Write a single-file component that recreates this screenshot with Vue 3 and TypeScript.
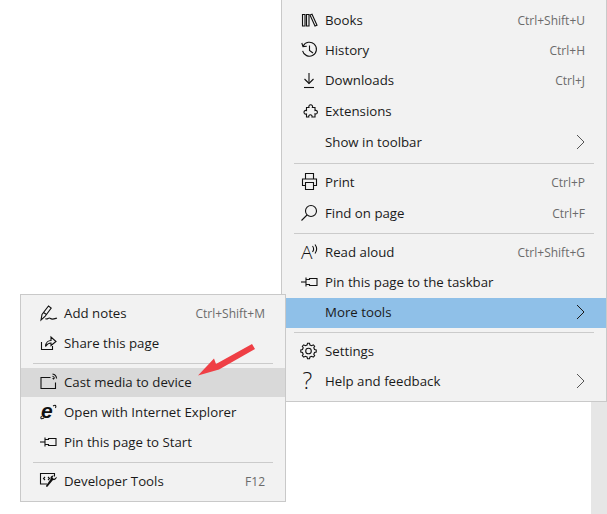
<script setup lang="ts">
interface Glyph { text: string; x: number; y: number; size: number; weight: number; family: string; italic?: boolean }
interface Row {
  kind: 'row' | 'sep'
  label?: string
  shortcut?: string
  chevron?: boolean
  size?: 'tall' | 'short'
  lift?: 'lift' | 'lift-more'
  state?: 'blue' | 'grey'
  paths?: string[]
  solid?: string[]
  glyph?: Glyph
  variant?: string
}

function gearPath(): string {
  const cx = 9.5
  const cy = 10
  const teeth = 8
  const pts: string[] = []
  for (let i = 0; i < teeth; i++) {
    const step = (Math.PI * 2) / teeth
    const a = i * step
    const spots: [number, number][] = [
      [a - step * 0.3, 6.2],
      [a - step * 0.16, 7.8],
      [a + step * 0.16, 7.8],
      [a + step * 0.3, 6.2],
    ]
    for (const [ang, r] of spots) {
      pts.push(`${(cx + r * Math.cos(ang)).toFixed(2)} ${(cy + r * Math.sin(ang)).toFixed(2)}`)
    }
  }
  return `M${pts.join('L')}Z`
}

const pin = ['M2 10H7', 'M7 5.5V14.5', 'M7 7.500H10.500V6.500H18V13.500H10.500V12.500H7']

const mainRows: Row[] = [
  { kind: 'row', label: 'Books', shortcut: 'Ctrl+Shift+U', paths: ['M3.5 4.5H6V16H3.5Z', 'M7.5 4.5H10V16H7.5Z', 'M11 5L13 4.2L18 15.2L16 16Z'] },
  { kind: 'row', label: 'History', shortcut: 'Ctrl+H', paths: ['M4.2 6A7 7 0 1 1 3.6 10.8', 'M2.8 3L4 6.6L7.8 6.2', 'M10.5 5.5V10.5L14 13'] },
  { kind: 'row', label: 'Downloads', shortcut: 'Ctrl+J', paths: ['M10 3V13.5', 'M5.5 9L10 13.5L14.5 9', 'M5 17.5H15'] },
  { kind: 'row', label: 'Extensions', size: 'tall', paths: ['M8 6.5H10C9.4 4.8 10.4 3.8 11.7 3.8C13 3.8 14 4.8 13.4 6.5H16V9.5C17.5 9 18.4 10 18.4 11.2C18.4 12.5 17.5 13.3 16 12.8V16H13C13.4 14.6 12.4 13.8 11.4 13.8C10.4 13.8 9.4 14.6 9.8 16H7.5V13C6 13.6 5 12.5 5 11.3C5 10 6.2 9 7.5 9.6V6.5Z'] },
  { kind: 'row', label: 'Show in toolbar', chevron: true, size: 'tall' },
  { kind: 'sep', variant: 'sep-wide' },
  { kind: 'row', label: 'Print', shortcut: 'Ctrl+P', size: 'tall', lift: 'lift', paths: ['M6.5 7V1.5H14.5V7', 'M6 13.5H3.5V7H17.5V13.5H15', 'M6.5 10.5H14.5V17.5H6.5Z'] },
  { kind: 'row', label: 'Find on page', shortcut: 'Ctrl+F', paths: ['M17.5 8A5.5 5.5 0 1 1 6.5 8A5.5 5.5 0 1 1 17.5 8Z', 'M8 12L2.5 17.5'] },
  { kind: 'sep' },
  { kind: 'row', label: 'Read aloud', shortcut: 'Ctrl+Shift+G', paths: ['M13.5 4C15 6 15 8 13.5 10', 'M16 2.5C18.2 5.5 18.2 8.5 16 11.5'], glyph: { text: 'A', x: 2, y: 17, size: 19, weight: 300, family: 'Open Sans' } },
  { kind: 'row', label: 'Pin this page to the taskbar', size: 'tall', lift: 'lift', paths: pin },
  { kind: 'row', label: 'More tools', chevron: true, state: 'blue', lift: 'lift-more' },
  { kind: 'sep', variant: 'sep-tight' },
  { kind: 'row', label: 'Settings', paths: [gearPath(), 'M12.3 10A2.8 2.8 0 1 1 6.7 10A2.8 2.8 0 1 1 12.3 10Z'] },
  { kind: 'row', label: 'Help and feedback', chevron: true, glyph: { text: '?', x: 3.5, y: 18, size: 23, weight: 300, family: 'Open Sans' } },
]

const subRows: Row[] = [
  { kind: 'row', label: 'Add notes', shortcut: 'Ctrl+Shift+M', paths: ['M3 17L4 11.5L10.5 3L13.2 5L7 13.5Z', 'M5.5 9.5L8.5 11.5', 'M7.5 15.5C9.5 17.5 10.5 13.5 12.5 15.5C14 17 16 16 19 15'] },
  { kind: 'row', label: 'Share this page', paths: ['M3.5 9V16.5H14.5V13', 'M7.5 13.5C7.8 9.5 10.5 7.5 13 7.5V4L18 8.5L13 12.5V10C10.8 10 9 11.2 7.5 13.5Z'] },
  { kind: 'sep', variant: 'sep-sub' },
  { kind: 'row', label: 'Cast media to device', state: 'grey', size: 'short', lift: 'lift', paths: ['M12.5 5.5H3V16.500H17.500V10.500', 'M14.5 2C16.8 2.3 18.3 3.8 18.6 6.500', 'M14.5 4.200C15.800 4.500 16.300 5.200 16.600 6.500', 'M14.5 6.500H15.500V7.500'] },
  { kind: 'row', label: 'Open with Internet Explorer', glyph: { text: 'e', x: 3, y: 15.5, size: 21, weight: 700, family: 'Liberation Sans', italic: true }, paths: ['M3.5 14C2 16.5 3 17.5 6 16', 'M15 4C17.5 2.5 18.5 3.5 17.5 6'] },
  { kind: 'row', label: 'Pin this page to Start', paths: pin },
  { kind: 'sep' },
  { kind: 'row', label: 'Developer Tools', shortcut: 'F12', paths: ['M16.5 5.5V2.5H2.5V13H9', 'M7 6L5.5 7.5L7 9', 'M10 6L11.5 7.5L10 9'], solid: ['M18.8 5.8C18.9 8 17 9.6 15 9L9.6 15.6C8.8 16.4 7.6 15.4 8.2 14.4L12.6 8C12 6 13.6 4.4 15.8 4.6L14.4 6.4L16 8L18.8 5.8Z'] },
]

const menus = [
  { name: 'main', rows: mainRows },
  { name: 'sub', rows: subRows },
]
</script>

<template>
  <div class="page">
    <div class="strip"></div>
    <div v-for="menu in menus" :key="menu.name" class="menu" :class="`menu-${menu.name}`">
      <template v-for="(row, i) in menu.rows" :key="i">
        <div v-if="row.kind === 'sep'" class="sep" :class="row.variant"></div>
        <div v-else class="row" :class="[row.size ?? '', row.lift ?? '', row.state ? `is-${row.state}` : '']">
          <svg class="icon" viewBox="0 0 20 20" width="20" height="20">
            <text
              v-if="row.glyph"
              class="glyph"
              :x="row.glyph.x"
              :y="row.glyph.y"
              :font-size="row.glyph.size"
              :font-weight="row.glyph.weight"
              :font-family="row.glyph.family"
              :font-style="row.glyph.italic ? 'italic' : 'normal'"
            >{{ row.glyph.text }}</text>
            <path v-for="d in row.paths" :key="d" :d="d" class="line" />
            <path v-for="d in row.solid" :key="d" :d="d" class="fill" />
          </svg>
          <span class="label">{{ row.label }}</span>
          <span v-if="row.shortcut" class="shortcut">{{ row.shortcut }}</span>
          <svg v-if="row.chevron" class="chevron" viewBox="0 0 9 16" width="9" height="16">
            <path d="M1 1L8 8L1 15" />
          </svg>
        </div>
      </template>
    </div>
    <svg class="arrow" viewBox="0 0 607 514" width="607" height="514">
      <path d="M198 375.500L214 358.500L216 364L252 344L255 349L219 369.500Z" />
    </svg>
  </div>
</template>

<style>
html, body { margin: 0; background: #fff; }
</style>

<style scoped>
.page {
  position: relative;
  width: 607px;
  height: 514px;
  overflow: hidden;
  background: #fff;
  font-family: "Open Sans", "Noto Sans", sans-serif;
  color: #1a1a1a;
}
.strip {
  position: absolute;
  left: 591px;
  top: 380px;
  width: 16px;
  height: 134px;
  background: #e6e6e6;
}
.menu {
  position: absolute;
  box-sizing: border-box;
  display: flex;
  flex-direction: column;
  background: #f2f2f2;
  border: 1px solid #c9c9c9;
}
.menu-main {
  left: 281px;
  top: -1px;
  width: 326px;
  height: 403px;
  padding: 5px 0 0;
}
.menu-main .row { padding-left: 17px; padding-right: 21px; }
.menu-main .sep { margin-left: 12px; margin-right: 12px; }
.menu-sub {
  left: 20px;
  top: 294px;
  width: 266px;
  height: 208px;
  padding: 3px 0 0;
}
.menu-sub .row { padding-left: 17px; padding-right: 20px; }
.menu-sub .sep { margin-left: 12px; margin-right: 12px; }
.row {
  box-sizing: border-box;
  display: flex;
  align-items: center;
  height: 30px;
  flex: none;
}
.row.tall { height: 31px; }
.row.short { height: 29px; }
.row.lift { padding-bottom: 1px; }
.row.lift-more { padding-bottom: 2px; }
.is-blue { background: #8fc0e8; }
.is-grey { background: #d9d9d9; }
.icon { flex: none; margin-right: 6px; overflow: visible; }
.line {
  fill: none;
  stroke: #111;
  stroke-width: 1.1;
}
.fill { fill: #111; }
.glyph { fill: #111; }
.label {
  flex: 1;
  font-size: 13.25px;
  white-space: nowrap;
}
.shortcut {
  font-size: 12px;
  color: #6b6b6b;
  white-space: nowrap;
}
.chevron { flex: none; }
.chevron path {
  fill: none;
  stroke: #555;
  stroke-width: 1;
}
.is-blue .chevron path { stroke: #1a1a1a; }
.sep {
  height: 1px;
  flex: none;
  background: #cbcbcb;
  margin: 5px 0 3px;
}
.sep-wide { margin-top: 6px; }
.sep-tight { margin-top: 4px; }
.sep-sub { margin-bottom: 4px; }
.arrow {
  position: absolute;
  left: 0;
  top: 0;
  pointer-events: none;
}
.arrow path { fill: #ef3f45; }
</style>
